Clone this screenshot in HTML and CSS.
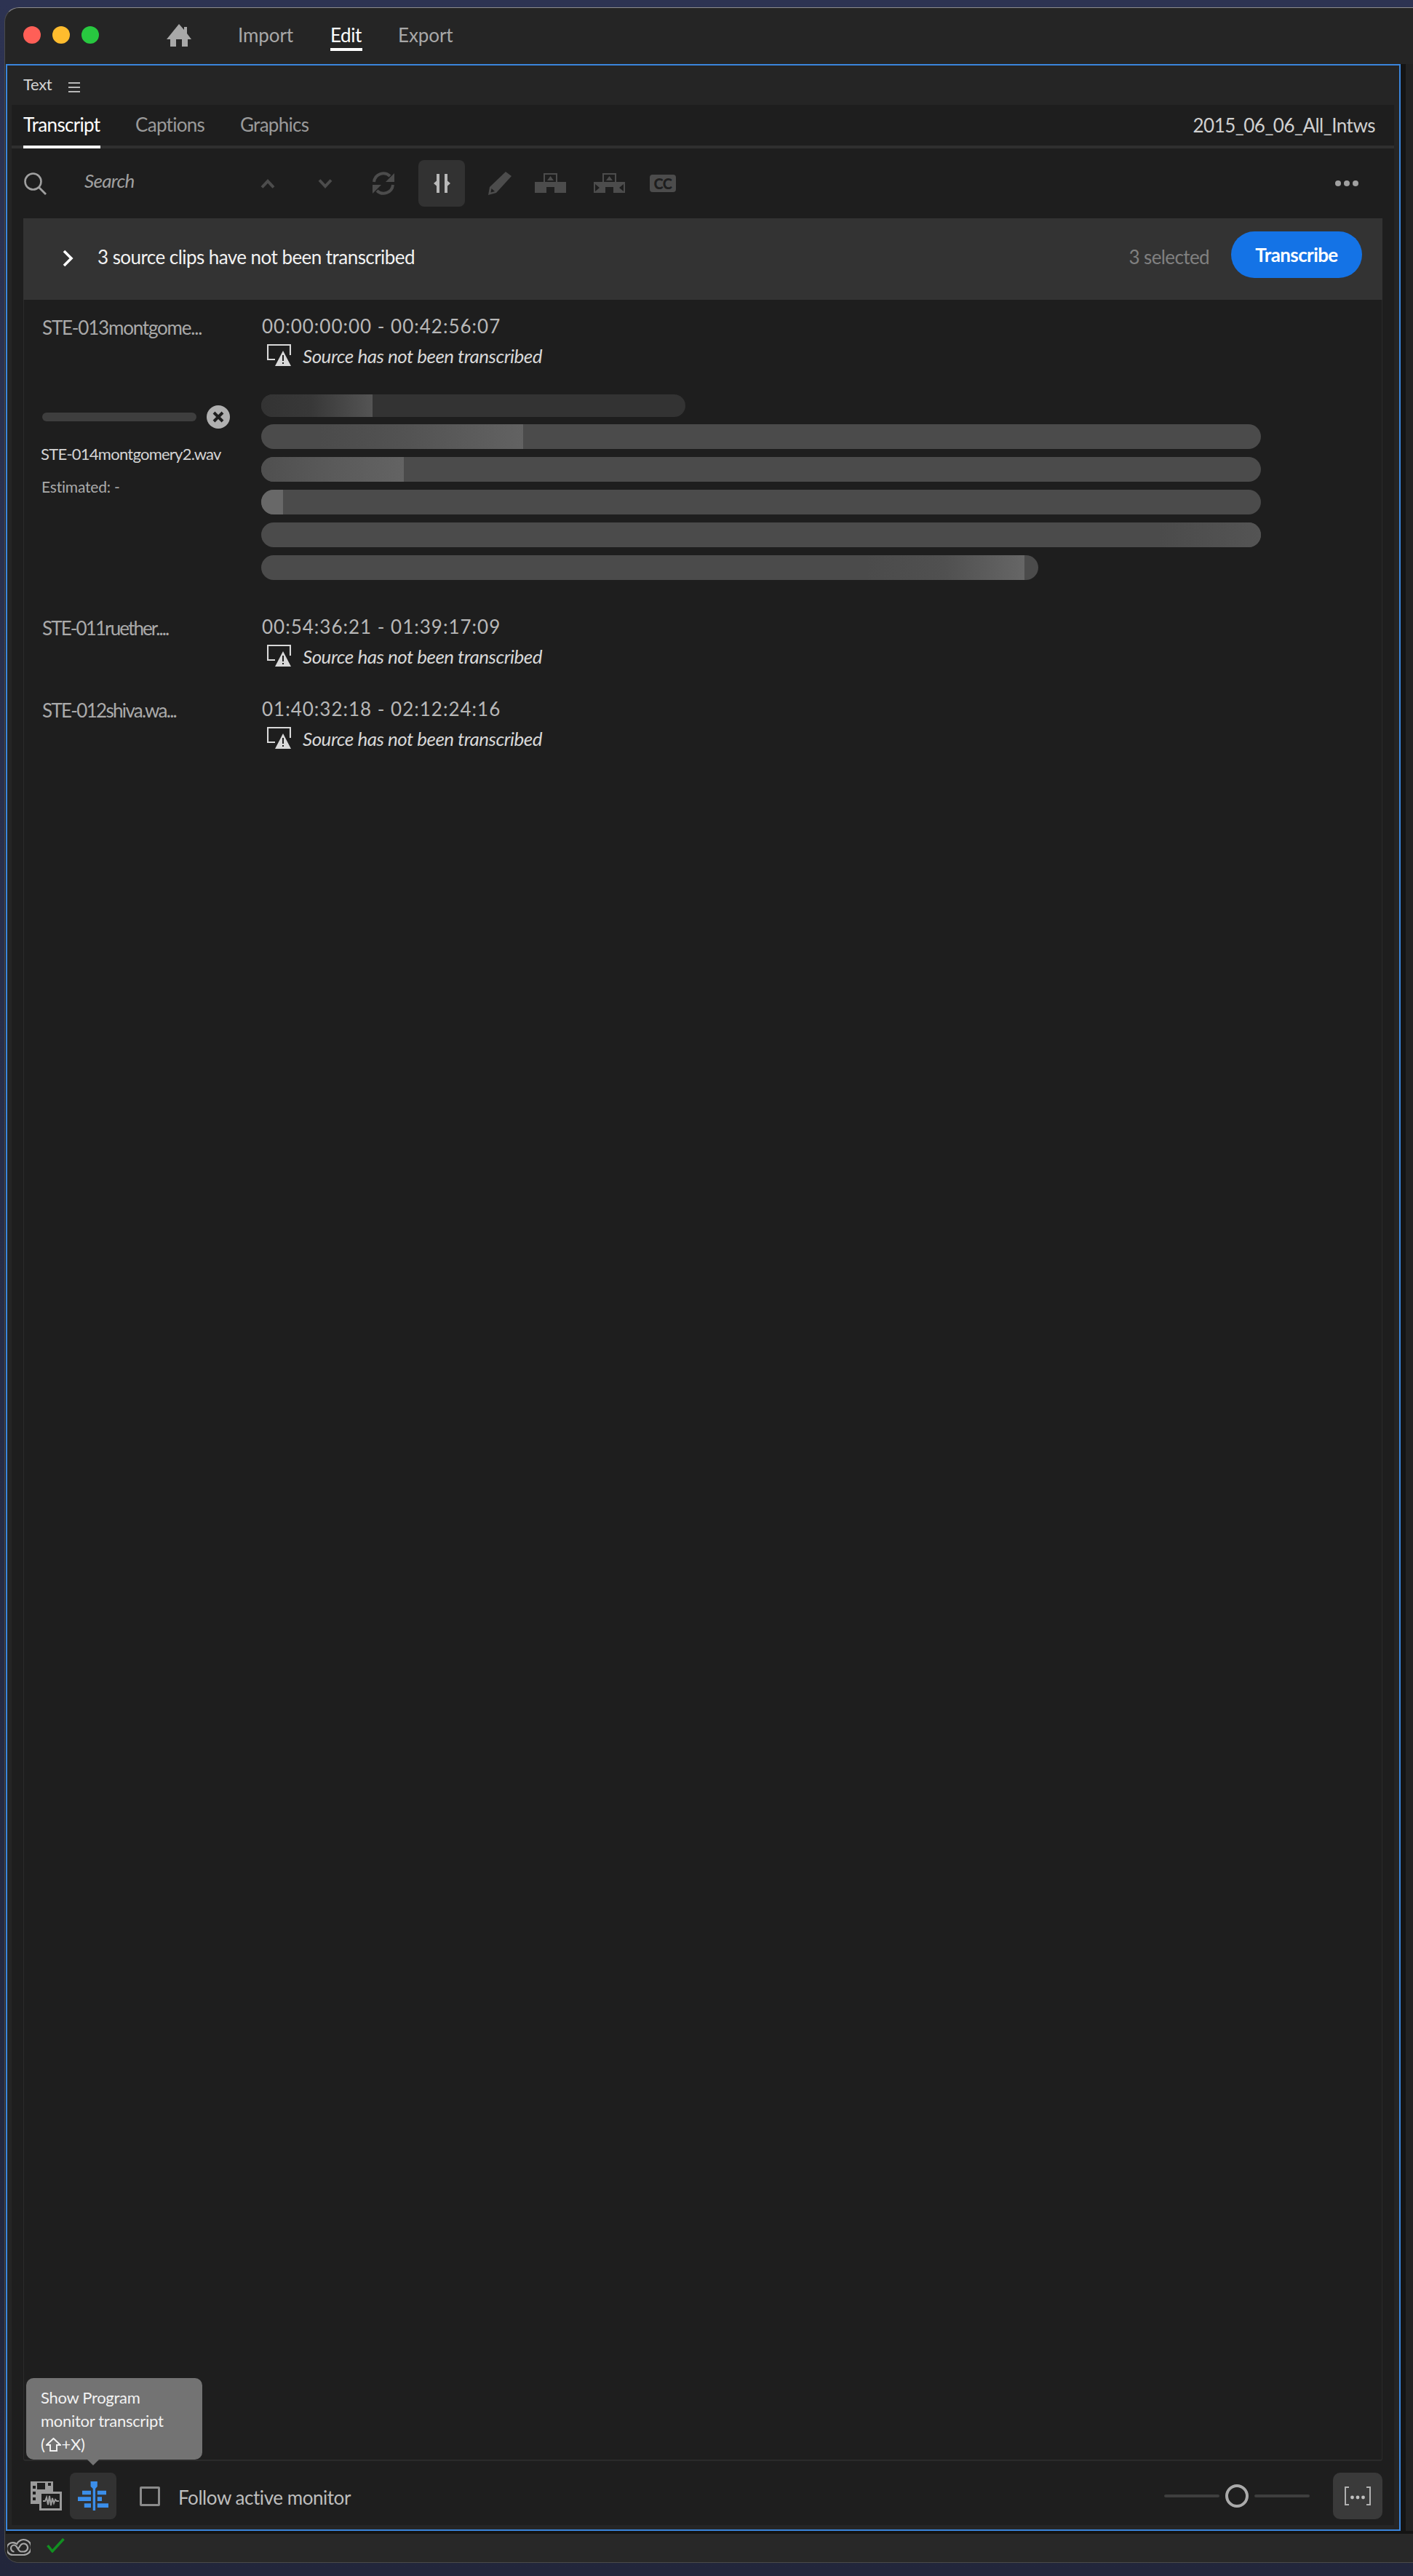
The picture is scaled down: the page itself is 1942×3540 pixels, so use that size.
FILE: index.html
```html
<!DOCTYPE html>
<html lang="en">
<head>
<meta charset="utf-8">
<title>Text panel</title>
<link rel="stylesheet" href="styles.css">
</head>
<body>
<div class="window">
  <header class="titlebar">
    <div class="lights"><i class="light red"></i><i class="light yellow"></i><i class="light green"></i></div>
    <svg class="home" viewBox="0 0 34 31"><path d="M17 0 L24 8 V4 H28 V13 L34 21 H29 V31 H21 V21 H13 V31 H5 V21 H0 Z" fill="#a8a8a8"/></svg>
    <nav class="topnav">
      <span class="nav-item nav-import">Import</span>
      <span class="nav-item nav-edit">Edit</span>
      <span class="nav-item nav-export">Export</span>
    </nav>
  </header>
  <div class="workspace">
    <section class="panel">
      <div class="panel-head">
        <span class="panel-title">Text</span>
        <svg class="burger" viewBox="0 0 16 14"><path d="M0 1H16M0 7H16M0 13H16" stroke="#b8b8b8" stroke-width="2"/></svg>
      </div>
      <div class="panel-body">
        <div class="tabs">
          <span class="tab tab-active">Transcript</span>
          <span class="tab tab-captions">Captions</span>
          <span class="tab tab-graphics">Graphics</span>
          <span class="seq-name">2015_06_06_All_Intws</span>
        </div>
        <div class="toolbar">
          <svg class="search-icon" viewBox="0 0 31 31"><circle cx="12.5" cy="12.5" r="11" fill="none" stroke="#a0a0a0" stroke-width="2.6"/><path d="M20.5 20.5L30 30" stroke="#a0a0a0" stroke-width="2.8"/></svg>
          <span class="search-text">Search</span>
          <svg class="tb-up" viewBox="0 0 20 13"><path d="M2 11.5L10 3L18 11.5" fill="none" stroke="#4c4c4c" stroke-width="4"/></svg>
          <svg class="tb-down" viewBox="0 0 20 13"><path d="M2 1.5L10 10L18 1.5" fill="none" stroke="#4c4c4c" stroke-width="4"/></svg>
          <svg class="tb-sync" viewBox="0 0 32 32"><path d="M3 14A13 13 0 0 1 25 6" fill="none" stroke="#4c4c4c" stroke-width="4"/><path d="M31 2V14H19Z" fill="#4c4c4c"/><path d="M29 18A13 13 0 0 1 7 26" fill="none" stroke="#4c4c4c" stroke-width="4"/><path d="M1 30V18H13Z" fill="#4c4c4c"/></svg>
          <span class="tb-active"><svg class="tb-brackets" viewBox="0 0 23 26"><path d="M4 0H8V26H4V16.500L0 13L4 9.500ZM15 0H19V9.500L23 13L19 16.500V26H15Z" fill="#b8b8b8"/></svg></span>
          <svg class="tb-pencil" viewBox="0 0 32 32"><path d="M24 0L32 6L11 29L0 32L2 21Z M4.500 23L3.500 28.500L9 27Z" fill="#4c4c4c" fill-rule="evenodd"/></svg>
          <svg class="tb-block" viewBox="0 0 43 27"><path d="M0 12H12V0H31V12H43V27H27V19H16V27H0Z M14 2V12H29V2Z M21.500 4L26 10H17Z" fill="#4c4c4c" fill-rule="evenodd"/></svg>
          <svg class="tb-block2" viewBox="0 0 43 27"><path d="M0 12H12V0H31V12H43V27H27V19H16V27H0Z M14 2V12H29V2Z M21.500 4L26 10H17Z M2 15V25L8 20Z M41 15V25L35 20Z" fill="#4c4c4c" fill-rule="evenodd"/></svg>
          <span class="tb-cc">CC</span>
          <span class="tb-more"><i></i><i></i><i></i></span>
        </div>
        <div class="banner">
          <svg class="banner-chevron" viewBox="0 0 16 24"><path d="M3 2L13 12L3 22" fill="none" stroke="#fff" stroke-width="3.600"/></svg>
          <span class="banner-text">3 source clips have not been transcribed</span>
          <span class="banner-count">3 selected</span>
          <button class="transcribe">Transcribe</button>
        </div>
        <div class="clip-list">
          <div class="clip">
            <div class="clip-name">STE-013montgome...</div>
            <div class="clip-main">
              <div class="clip-time">00:00:00:00 - 00:42:56:07</div>
              <div class="clip-warn">
                <svg class="warn-icon" viewBox="0 0 33 30"><path d="M11 21H1V1H32V15" fill="none" stroke="#d8d8d8" stroke-width="2.200"/><path d="M22 9L33 30H11Z M21 15V23H23V15Z M21 25V27H23V25Z" fill="#d8d8d8" fill-rule="evenodd"/></svg>
                <span class="warn-text">Source has not been transcribed</span>
              </div>
            </div>
          </div>
          <div class="clip-progress">
            <div class="prog-side">
              <div class="prog-top">
                <span class="prog-bar"></span>
                <svg class="prog-x" viewBox="0 0 32 32"><circle cx="16" cy="16" r="16" fill="#b0b0b0"/><path d="M10 10L22 22M22 10L10 22" stroke="#1e1e1e" stroke-width="4"/></svg>
              </div>
              <div class="prog-file">STE-014montgomery2.wav</div>
              <div class="prog-est">Estimated: -</div>
            </div>
            <div class="skeletons">
              <div class="sk sk-one"><span class="shine shine-one"></span></div>
              <div class="sk sk-full"><span class="shine shine-two"></span></div>
              <div class="sk sk-full"><span class="shine shine-three"></span></div>
              <div class="sk sk-full"><span class="shine shine-four"></span></div>
              <div class="sk sk-full"><span class="shine shine-five"></span></div>
              <div class="sk sk-six"><span class="shine shine-six"></span></div>
            </div>
          </div>
          <div class="clip">
            <div class="clip-name name-tight">STE-011ruether....</div>
            <div class="clip-main">
              <div class="clip-time">00:54:36:21 - 01:39:17:09</div>
              <div class="clip-warn">
                <svg class="warn-icon" viewBox="0 0 33 30"><path d="M11 21H1V1H32V15" fill="none" stroke="#d8d8d8" stroke-width="2.200"/><path d="M22 9L33 30H11Z M21 15V23H23V15Z M21 25V27H23V25Z" fill="#d8d8d8" fill-rule="evenodd"/></svg>
                <span class="warn-text">Source has not been transcribed</span>
              </div>
            </div>
          </div>
          <div class="clip">
            <div class="clip-name name-tight2">STE-012shiva.wa...</div>
            <div class="clip-main">
              <div class="clip-time">01:40:32:18 - 02:12:24:16</div>
              <div class="clip-warn">
                <svg class="warn-icon" viewBox="0 0 33 30"><path d="M11 21H1V1H32V15" fill="none" stroke="#d8d8d8" stroke-width="2.200"/><path d="M22 9L33 30H11Z M21 15V23H23V15Z M21 25V27H23V25Z" fill="#d8d8d8" fill-rule="evenodd"/></svg>
                <span class="warn-text">Source has not been transcribed</span>
              </div>
            </div>
          </div>
        </div>
        <footer class="footer">
          <div class="tooltip">Show Program<br>monitor transcript<br>(<svg class="shift-key" viewBox="0 0 21 19"><path d="M10.500 1L20 10H15V18H6V10H1Z" fill="none" stroke="#f2f2f2" stroke-width="2"/></svg>+X)</div>
          <svg class="ft-media" viewBox="0 0 43 40"><path d="M0 0H31V14H13V31H0Z" fill="#9a9a9a"/><path d="M3 6H7V10H3ZM3 14H7V18H3ZM3 22H7V26H3ZM24 2H28V6H24ZM9 2H20V11H9Z" fill="#1e1e1e"/><rect x="13.500" y="15.500" width="28" height="23" fill="#1e1e1e" stroke="#9a9a9a" stroke-width="3"/><path d="M17 27H20L22 22L24 32L26 20L28 33L30 23L32 30L34 25L36 27H39" fill="none" stroke="#9a9a9a" stroke-width="2"/></svg>
          <span class="ft-active"><svg class="ft-blue" viewBox="0 0 42 40"><path d="M17.600 0H26.800V7L24.100 10V40H20.700V10L17.600 7Z M6 12.700H18V18.300H6Z M26.800 12.700H39V18.300H26.800Z M0 21.300H18V27H0Z M26.800 21.300H33V27H26.800Z M8.800 30.300H18V36H8.800Z M26.800 30.300H42V36H26.800Z" fill="#3b8eea"/></svg></span>
          <span class="checkbox"></span>
          <span class="follow">Follow active monitor</span>
          <div class="slider"><i class="slider-line"></i><i class="slider-knob"></i><i class="slider-line"></i></div>
          <span class="ft-expand"><svg class="ft-brackets" viewBox="0 0 36 26"><path d="M6 1H1V25H6M30 1H35V25H30" fill="none" stroke="#b0b0b0" stroke-width="2"/><circle cx="10.500" cy="15" r="2.400" fill="#c0c0c0"/><circle cx="18" cy="15" r="2.400" fill="#c0c0c0"/><circle cx="25.500" cy="15" r="2.400" fill="#c0c0c0"/></svg></span>
        </footer>
      </div>
    </section>
    <aside class="side-panel"></aside>
  </div>
  <div class="statusbar">
    <svg class="cc-logo" viewBox="0 0 32 24"><g fill="none" stroke="#a8a8a8" stroke-width="2.200"><path d="M9 23H22.500A10.500 10.500 0 1 0 13 8A8.500 8.500 0 1 0 9 23Z"/><path d="M9.500 18.500A4.500 4.500 0 0 1 9.500 9.500C14 9.500 14.500 18.500 19 18.500H22.500A5.500 5.500 0 1 0 18 10L15.500 14"/></g></svg>
    <svg class="check" viewBox="0 0 25 20"><path d="M1.500 10L8 18L23.500 1" fill="none" stroke="#128f21" stroke-width="3.500"/></svg>
  </div>
</div>
</body>
</html>
```
FILE: styles.css
```css
* { box-sizing: border-box; }
html, body { margin: 0; padding: 0; }
body {
  width: 1942px;
  height: 3540px;
  overflow: hidden;
  background: linear-gradient(180deg, #2d3352 0%, #22263b 100%);
  font-family: "Lato", "DejaVu Sans", sans-serif;
  color: #c8c8c8;
  padding: 10px 0 0 6px;
}
.window {
  height: 3512px;
  background: #252525;
  border-top: 1px solid #8c8c8c;
  border-left: 1px solid #4a4a4a;
  border-bottom: 1px solid #4a4a4a;
  border-radius: 20px 0 0 20px;
  display: flex;
  flex-direction: column;
  overflow: hidden;
}
.titlebar {
  height: 77px;
  display: flex;
  align-items: flex-start;
  flex: none;
}
.lights { display: flex; gap: 16px; margin: 25px 0 0 25px; }
.light { width: 24px; height: 24px; border-radius: 50%; display: block; }
.red { background: #ff5f57; }
.yellow { background: #febc2e; }
.green { background: #28c840; }
.home { width: 34px; height: 31px; margin: 22px 0 0 93px; }
.topnav { display: flex; margin-left: 64px; }
.nav-item {
  font-size: 26px;
  line-height: 32px;
  margin-top: 21px;
  letter-spacing: -0.1px;
  color: #a8a8a8;
}
.nav-import { width: 127px; }
.nav-edit {
  width: 44px;
  height: 35px;
  color: #fff;
  letter-spacing: -0.4px;
  border-bottom: 4px solid #fff;
  margin-right: 49px;
  box-sizing: content-box;
  height: 34px;
}
.workspace {
  height: 3394px;
  flex: none;
  padding: 0;
  display: flex;
  background: #141414;
  margin-left: 1px;
}
.panel {
  width: 1917px;
  height: 3390px;
  flex: none;
  border: 2px solid #3a85dc;
  background: #252525;
  display: flex;
  flex-direction: column;
}
.side-panel { width: 10px; height: 3390px; margin-left: 7px; background: #222; flex: none; }
.panel-head {
  height: 54px;
  flex: none;
  display: flex;
  align-items: center;
  padding-left: 22px;
}
.panel-title { font-size: 22px; color: #d4d4d4; letter-spacing: -0.3px; line-height: 28px; margin-top: -2px; }
.burger { width: 16px; height: 14px; margin: 6px 0 0 23px; }
.panel-body {
  flex: 1;
  margin: 0 7px 6px 6px;
  background: #1e1e1e;
  display: flex;
  flex-direction: column;
  position: relative;
}
.tabs {
  height: 60px;
  flex: none;
  display: flex;
  border-bottom: 4px solid #2f2f2f;
  padding-left: 16px;
  position: relative;
}
.tab {
  font-size: 26px;
  line-height: 32px;
  margin-top: 11px;
  height: 49px;
  color: #9a9a9a;
  letter-spacing: -0.7px;
}
.tab-active { width: 106px; color: #fff; border-bottom: 4px solid #fff; margin-right: 48px; letter-spacing: -0.7px; white-space: nowrap; }
.tab-captions { width: 144px; }
.seq-name {
  margin: 12px 26px 0 auto;
  font-size: 26px;
  line-height: 32px;
  color: #d0d0d0;
  letter-spacing: -0.5px;
}
.toolbar {
  height: 96px;
  flex: none;
  display: flex;
  align-items: flex-start;
  padding-left: 17px;
}
.search-icon { width: 31px; height: 31px; margin-top: 33px; }
.search-text {
  font-size: 26px;
  line-height: 32px;
  margin: 28px 0 0 52px;
  width: 73px;
  font-style: italic;
  color: #a0a0a0;
  letter-spacing: -0.7px;
}
.tb-up { width: 20px; height: 13px; margin: 42px 0 0 169px; }
.tb-down { width: 20px; height: 13px; margin: 42px 0 0 59px; }
.tb-sync { width: 32px; height: 32px; margin: 32px 0 0 54px; }
.tb-active {
  width: 64px;
  height: 64px;
  margin: 16px 0 0 32px;
  background: #323232;
  border-radius: 8px;
  display: flex;
  align-items: center;
  justify-content: center;
}
.tb-brackets { width: 23px; height: 26px; }
.tb-pencil { width: 32px; height: 32px; margin: 32px 0 0 32px; }
.tb-block { width: 43px; height: 27px; margin: 34px 0 0 32px; }
.tb-block2 { width: 43px; height: 27px; margin: 34px 0 0 38px; }
.tb-cc {
  width: 36px;
  height: 24px;
  margin: 36px 0 0 34px;
  background: #4c4c4c;
  border-radius: 4px;
  color: #1e1e1e;
  font-size: 20px;
  font-weight: 900;
  line-height: 24px;
  text-align: center;
  letter-spacing: -0.5px;
}
.tb-more { display: flex; gap: 4px; margin: 44px 0 0 906px; }
.tb-more i { width: 8px; height: 8px; border-radius: 50%; background: #a0a0a0; display: block; }
.banner {
  height: 112px;
  flex: none;
  margin: 0 16px;
  background: #333;
  display: flex;
  align-items: center;
  padding: 0 28px 0 53px;
}
.banner-chevron { width: 16px; height: 24px; flex: none; margin-top: -2px; }
.banner-text { margin: -6px 0 0 33px; font-size: 26px; color: #f2f2f2; letter-spacing: -0.55px; line-height: 32px; }
.banner-count { margin: -6px 0 0 auto; font-size: 26px; color: #808080; letter-spacing: -0.6px; line-height: 32px; }
.transcribe {
  width: 180px;
  height: 64px;
  margin: -12px 0 0 30px;
  border: 0;
  border-radius: 32px;
  background: #1473e6;
  color: #fff;
  font-family: inherit;
  font-size: 26px;
  font-weight: 700;
  letter-spacing: -0.6px;
}
.clip-list {
  flex: 1;
  margin: 0 16px;
  border: solid #2b2b2b;
  border-width: 0 1px 2px 1px;
  border-radius: 0 0 3px 3px;
  min-height: 0;
}
.clip {
  height: 113px;
  display: flex;
  padding: 20px 0 0 25px;
}
.clip-name {
  width: 302px;
  flex: none;
  font-size: 26px;
  line-height: 32px;
  color: #aaa;
  letter-spacing: -1.2px;
  margin-top: 2px;
}
.name-tight { letter-spacing: -1.9px; }
.name-tight2 { letter-spacing: -1.7px; }
.clip-time { font-size: 26px; line-height: 32px; color: #b8b8b8; letter-spacing: 1px; }
.clip-warn { display: flex; align-items: flex-start; margin: 9px 0 0 7px; }
.warn-icon { width: 33px; height: 30px; flex: none; }
.warn-text {
  margin-left: 16px;
  font-size: 26px;
  line-height: 32px;
  font-style: italic;
  color: #d8d8d8;
  letter-spacing: -0.5px;
}
.clip-progress {
  height: 300px;
  display: flex;
  padding: 17px 0 0 25px;
}
.prog-side { width: 301px; flex: none; }
.prog-top { display: flex; align-items: center; margin-top: 15px; }
.prog-bar { width: 212px; height: 12px; border-radius: 6px; background: #3e3e3e; display: block; }
.prog-x { width: 32px; height: 32px; margin-left: 14px; }
.prog-file { font-size: 22px; line-height: 28px; color: #d4d4d4; letter-spacing: -0.75px; margin: 21px 0 0 -2px; white-space: nowrap; }
.prog-est { font-size: 21px; line-height: 26px; color: #aaa; letter-spacing: -0.2px; margin: 18px 0 0 -1px; }
.skeletons { display: flex; flex-direction: column; gap: 11px; }
.sk {
  width: 1374px;
  height: 34px;
  border-radius: 17px;
  background: #4b4b4b;
  overflow: hidden;
  position: relative;
}
.sk-one { width: 583px; height: 31px; background: #333; margin-bottom: -1px; }
.sk-six { width: 1068px; }
.shine { display: block; position: absolute; top: 0; bottom: 0; }
.shine-one { left: 0; width: 153px; background: linear-gradient(90deg, #333 0%, #383838 45%, #545454 100%); }
.shine-two { left: 80px; width: 280px; background: linear-gradient(90deg, #4b4b4b 0%, #525252 40%, #626262 100%); }
.shine-three { left: 0; width: 196px; background: linear-gradient(90deg, #4f4f4f 0%, #5a5a5a 50%, #636363 100%); }
.shine-four { left: 0; width: 30px; background: #686868; }
.shine-five { right: 0; width: 140px; background: linear-gradient(90deg, #4b4b4b 0%, #545454 100%); }
.shine-six { left: 830px; width: 219px; background: linear-gradient(90deg, #4b4b4b 0%, #505050 50%, #666 100%); }
.footer {
  height: 88px;
  flex: none;
  display: flex;
  align-items: flex-start;
  padding-left: 26px;
  position: relative;
}
.tooltip {
  position: absolute;
  left: 20px;
  bottom: 90px;
  width: 242px;
  height: 112px;
  padding: 11px 0 0 20px;
  background: #737373;
  border-radius: 10px;
  color: #f2f2f2;
  font-size: 22px;
  line-height: 32px;
  letter-spacing: -0.3px;
}
.tooltip::after {
  content: "";
  position: absolute;
  left: 84px;
  top: 112px;
  border: 8px solid transparent;
  border-top-color: #737373;
  border-bottom: 0;
}
.shift-key { width: 21px; height: 19px; margin: 0 1px; vertical-align: -2px; }
.ft-media { width: 43px; height: 40px; margin-top: 28px; }
.ft-active {
  width: 64px;
  height: 64px;
  margin: 16px 0 0 11px;
  background: #323232;
  border-radius: 8px;
  display: flex;
  align-items: center;
  justify-content: center;
}
.ft-blue { width: 42px; height: 40px; }
.checkbox {
  width: 28px;
  height: 27px;
  margin: 35px 0 0 32px;
  border: 3px solid #8a8a8a;
  border-radius: 2px;
}
.follow {
  margin: 34px 0 0 25px;
  font-size: 26px;
  line-height: 32px;
  color: #bdbdbd;
  letter-spacing: -0.45px;
}
.slider { display: flex; align-items: center; gap: 8px; margin: 32px 0 0 auto; }
.slider-line { width: 76px; height: 4px; background: #3e3e3e; border-radius: 2px; display: block; }
.slider-knob { width: 32px; height: 32px; border: 4px solid #aaa; border-radius: 50%; display: block; }
.ft-expand {
  width: 68px;
  height: 64px;
  margin: 16px 16px 0 32px;
  background: #3a3a3a;
  border-radius: 10px;
  display: flex;
  align-items: center;
  justify-content: center;
}
.ft-brackets { width: 36px; height: 26px; }
.statusbar {
  flex: 1;
  min-height: 0;
  display: flex;
  align-items: flex-start;
  background: #282828;
  padding-left: 3px;
}
.cc-logo { width: 32px; height: 24px; margin-top: 6px; }
.check { width: 25px; height: 20px; margin: 6px 0 0 22px; }
```
